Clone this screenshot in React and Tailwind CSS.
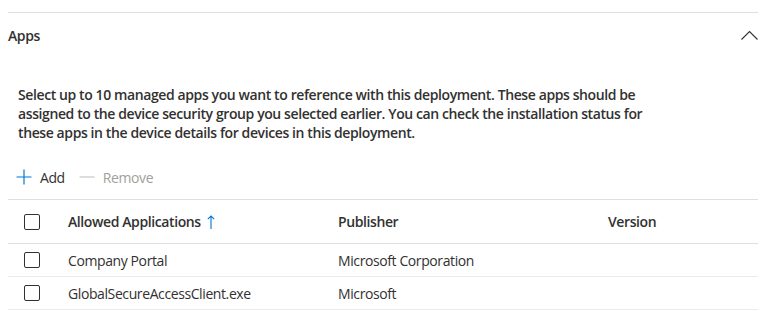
const font = { fontFamily: '"Segoe UI", "Open Sans", "Liberation Sans", sans-serif' };

const Checkbox = () => (
  <span className="block w-4 h-4 rounded-[2px] border border-[#323130] bg-white" />
);

const rows = [
  { name: "Company Portal", publisher: "Microsoft Corporation", version: "" },
  { name: "GlobalSecureAccessClient.exe", publisher: "Microsoft", version: "" },
];

const App = () => {
  return (
    <div
      className="w-[766px] h-[321px] bg-white text-[#323130] overflow-hidden tracking-[-0.4px]"
      style={font}
    >
      <div className="mx-2 mt-3 border-t border-[#e1dfdd]">
        <div className="h-[44px] flex items-center justify-between">
          <span className="text-[14px] font-semibold">Apps</span>
          <svg width="17" height="10" viewBox="0 0 17 10" className="mr-0">
            <polyline points="0.5,9.5 8.5,1.5 16.5,9.5" stroke="#323130" strokeWidth="1.1" fill="none" />
          </svg>
        </div>

        <p className="mt-[28px] ml-[10px] w-[640px] text-[14px] font-semibold leading-[19px]">
          Select up to 10 managed apps you want to reference with this deployment. These apps should be
          assigned to the device security group you selected earlier. You can check the installation status for
          these apps in the device details for devices in this deployment.
        </p>

        <div className="mt-[17px] h-[36px] flex items-center text-[14px]">
          <button className="flex items-center ml-[8px] mr-[14px]">
            <svg width="16" height="16" viewBox="0 0 16 16" className="mr-2">
              <path d="M8 0.5v15M0.5 8h15" stroke="#0078d4" strokeWidth="1.2" fill="none" />
            </svg>
            <span>Add</span>
          </button>
          <button className="flex items-center text-[#a19f9d]">
            <svg width="16" height="16" viewBox="0 0 16 16" className="mr-2">
              <path d="M0.5 8h15" stroke="#c8c6c4" strokeWidth="1.2" fill="none" />
            </svg>
            <span>Remove</span>
          </button>
        </div>

        <div className="mt-[4px] border-t border-[#e1dfdd] text-[14px]">
          <div className="h-[44px] flex items-center border-b border-[#e1dfdd] font-semibold">
            <div className="w-[60px] pl-4"><Checkbox /></div>
            <div className="w-[270px] flex items-center">
              Allowed Applications
              <svg width="8" height="14" viewBox="0 0 8 14" className="ml-[6px]">
                <path d="M4 1v13M0.8 4.2L4 1l3.2 3.2" stroke="#0078d4" strokeWidth="1.1" fill="none" />
              </svg>
            </div>
            <div className="w-[270px]">Publisher</div>
            <div className="flex-1">Version</div>
          </div>
          {rows.map((r) => (
            <div key={r.name} className="h-[33px] flex items-center border-b border-[#edebe9]">
              <div className="w-[60px] pl-4"><Checkbox /></div>
              <div className="w-[270px]">{r.name}</div>
              <div className="w-[270px]">{r.publisher}</div>
              <div className="flex-1">{r.version}</div>
            </div>
          ))}
        </div>
      </div>
    </div>
  );
};

export default App;
